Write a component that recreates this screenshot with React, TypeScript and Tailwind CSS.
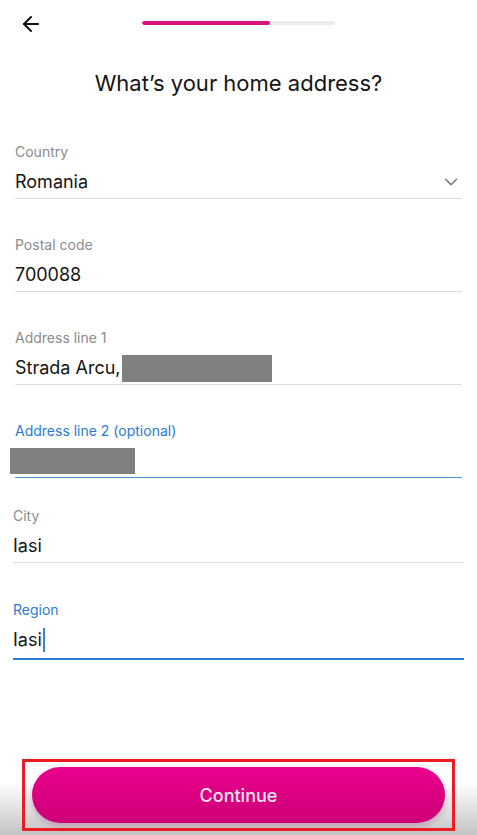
import { ArrowLeft, ChevronDown } from "lucide-react";

type FieldProps = {
	label: string;
	value?: string;
	focused?: boolean;
	active?: boolean;
	className?: string;
	children?: React.ReactNode;
	right?: React.ReactNode;
};

function Field({ label, value, focused, active, className, children, right }: FieldProps) {
	const line = active
		? "mt-[6px] h-[2px] bg-[#2a7bd3]"
		: focused
			? "mt-1 h-px bg-[#4a90dd]"
			: "mt-1 h-px bg-[#d8dde2]";
	return (
		<div className={className}>
			<div
				className={`h-5 text-[14px] leading-5 ${focused ? "text-[#2a7bd3]" : "text-[#8c8c8c]"}`}
			>
				{label}
			</div>
			<div className="mt-2 flex items-center">
				<div className="flex h-6 flex-1 items-center text-[18px] leading-6 text-[#141414]">
					{value}
					{children}
				</div>
				{right}
			</div>
			<div className={line} />
		</div>
	);
}

export default function App() {
	return (
		<div
			className="flex h-[835px] w-[477px] flex-col overflow-hidden bg-white"
			style={{ fontFamily: "Inter, 'Noto Sans', sans-serif" }}
		>
			<div className="relative flex h-[46px] items-center justify-center">
				<ArrowLeft
					className="absolute left-[19px] top-[12px] text-[#111]"
					size={24}
					strokeWidth={2}
				/>
				<div className="flex h-[4px] w-[193px] overflow-hidden rounded-full bg-[#e8ecf0]">
					<div className="h-full w-[128px] rounded-full bg-[#d8137e]" />
				</div>
			</div>

			<h1 className="mt-[23px] text-center text-[22px] leading-[28px] text-[#141414]">
				What’s your home address?
			</h1>

			<div className="mt-[45px] flex flex-col">
				<Field
					label="Country"
					value="Romania"
					className="mx-[15px]"
					right={<ChevronDown size={22} strokeWidth={1.75} className="text-[#7a7a7a]" />}
				/>
				<Field label="Postal code" value="700088" className="mx-[15px] mt-[36px]" />
				<Field label="Address line 1" className="mx-[15px] mt-[36px]">
					<span>Strada Arcu,</span>
					<span className="ml-[1px] h-[27px] w-[150px] bg-[#808080]" />
				</Field>
				<Field label="Address line 2 (optional)" focused className="mx-[15px] mt-[36px]">
					<span className="-ml-[5px] h-[26px] w-[125px] bg-[#808080]" />
				</Field>
				<Field label="City" value="Iasi" className="mx-[13px] mt-[28px]" />
				<Field label="Region" active focused className="mx-[13px] mt-[37px]">
					<span>Iasi</span>
					<span className="ml-[1px] h-[24px] w-[2px] bg-[#3b82e0]" />
				</Field>
			</div>

			<div className="mt-auto h-[95px] bg-gradient-to-b from-white from-[45%] to-[#c4c4c4] pt-[19px]">
				<div className="mx-[22px] h-[72px] border-[3px] border-[#ec1c24] px-[7px] py-[5px]">
					<button className="flex h-[56px] w-full items-center justify-center rounded-full bg-gradient-to-b from-[#ea008d] to-[#cc0076] text-[18px] font-medium text-[#f8e6f1] shadow-[0_3px_6px_rgba(160,0,90,0.25)]">
						Continue
					</button>
				</div>
			</div>
		</div>
	);
}
